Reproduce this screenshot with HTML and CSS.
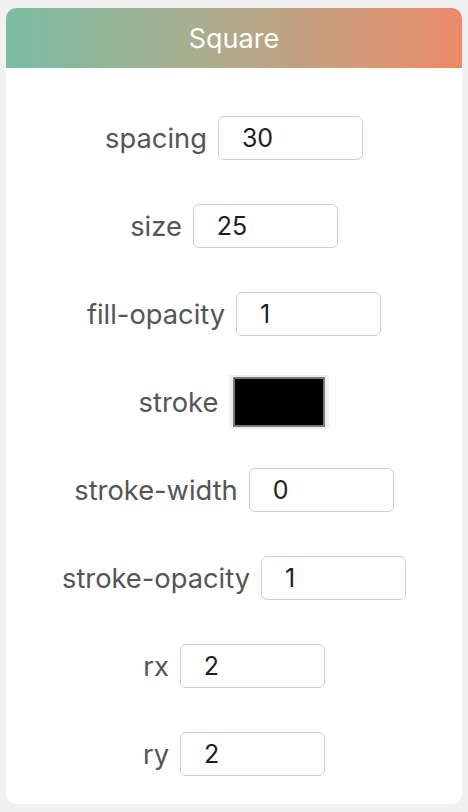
FILE: index.html
```html
<!DOCTYPE html>
<html>
<head>
<meta charset="utf-8">
<link rel="stylesheet" href="styles.css">
</head>
<body>
<div class="card">
  <div class="header">Square</div>
  <div class="body">
    <div class="row"><span class="label">spacing</span><div class="field">30</div></div>
    <div class="row"><span class="label">size</span><div class="field">25</div></div>
    <div class="row"><span class="label">fill-opacity</span><div class="field">1</div></div>
    <div class="row"><span class="label">stroke</span><div class="swatch"><div class="swatch-fill"></div></div></div>
    <div class="row"><span class="label">stroke-width</span><div class="field">0</div></div>
    <div class="row"><span class="label">stroke-opacity</span><div class="field">1</div></div>
    <div class="row"><span class="label">rx</span><div class="field">2</div></div>
    <div class="row"><span class="label">ry</span><div class="field">2</div></div>
  </div>
</div>
</body>
</html>
```
FILE: styles.css
```css
html, body {
  margin: 0;
  padding: 0;
  background: #f0f0f0;
}
body {
  padding: 8px 6px;
  font-family: Inter, "Liberation Sans", sans-serif;
}
.card {
  background: #ffffff;
  border-radius: 10px;
  overflow: hidden;
  height: 796px;
  display: flex;
  flex-direction: column;
}
.header {
  height: 60px;
  display: flex;
  align-items: center;
  justify-content: center;
  color: #ffffff;
  font-size: 27px;
  background: linear-gradient(90deg, #7bbfa5 0%, #b2aa8b 50%, #ec8b69 100%);
}
.body {
  display: flex;
  flex-direction: column;
  gap: 44px;
  padding-top: 48px;
}
.row {
  height: 44px;
  display: flex;
  align-items: center;
  justify-content: center;
  gap: 11px;
}
.label {
  font-size: 27.3px;
  color: #555555;
}
.field {
  box-sizing: border-box;
  width: 145px;
  height: 44px;
  border: 1.5px solid #cfcfcf;
  border-radius: 6px;
  padding-left: 23px;
  display: flex;
  align-items: center;
  font-size: 25px;
  color: #1e1e1e;
}
.swatch {
  box-sizing: border-box;
  width: 100px;
  height: 54px;
  flex: none;
  padding: 2px 4px;
  background: #efefef;
}
.swatch-fill {
  box-sizing: border-box;
  width: 100%;
  height: 100%;
  background: #000000;
  border: 2px solid #777777;
}
```
